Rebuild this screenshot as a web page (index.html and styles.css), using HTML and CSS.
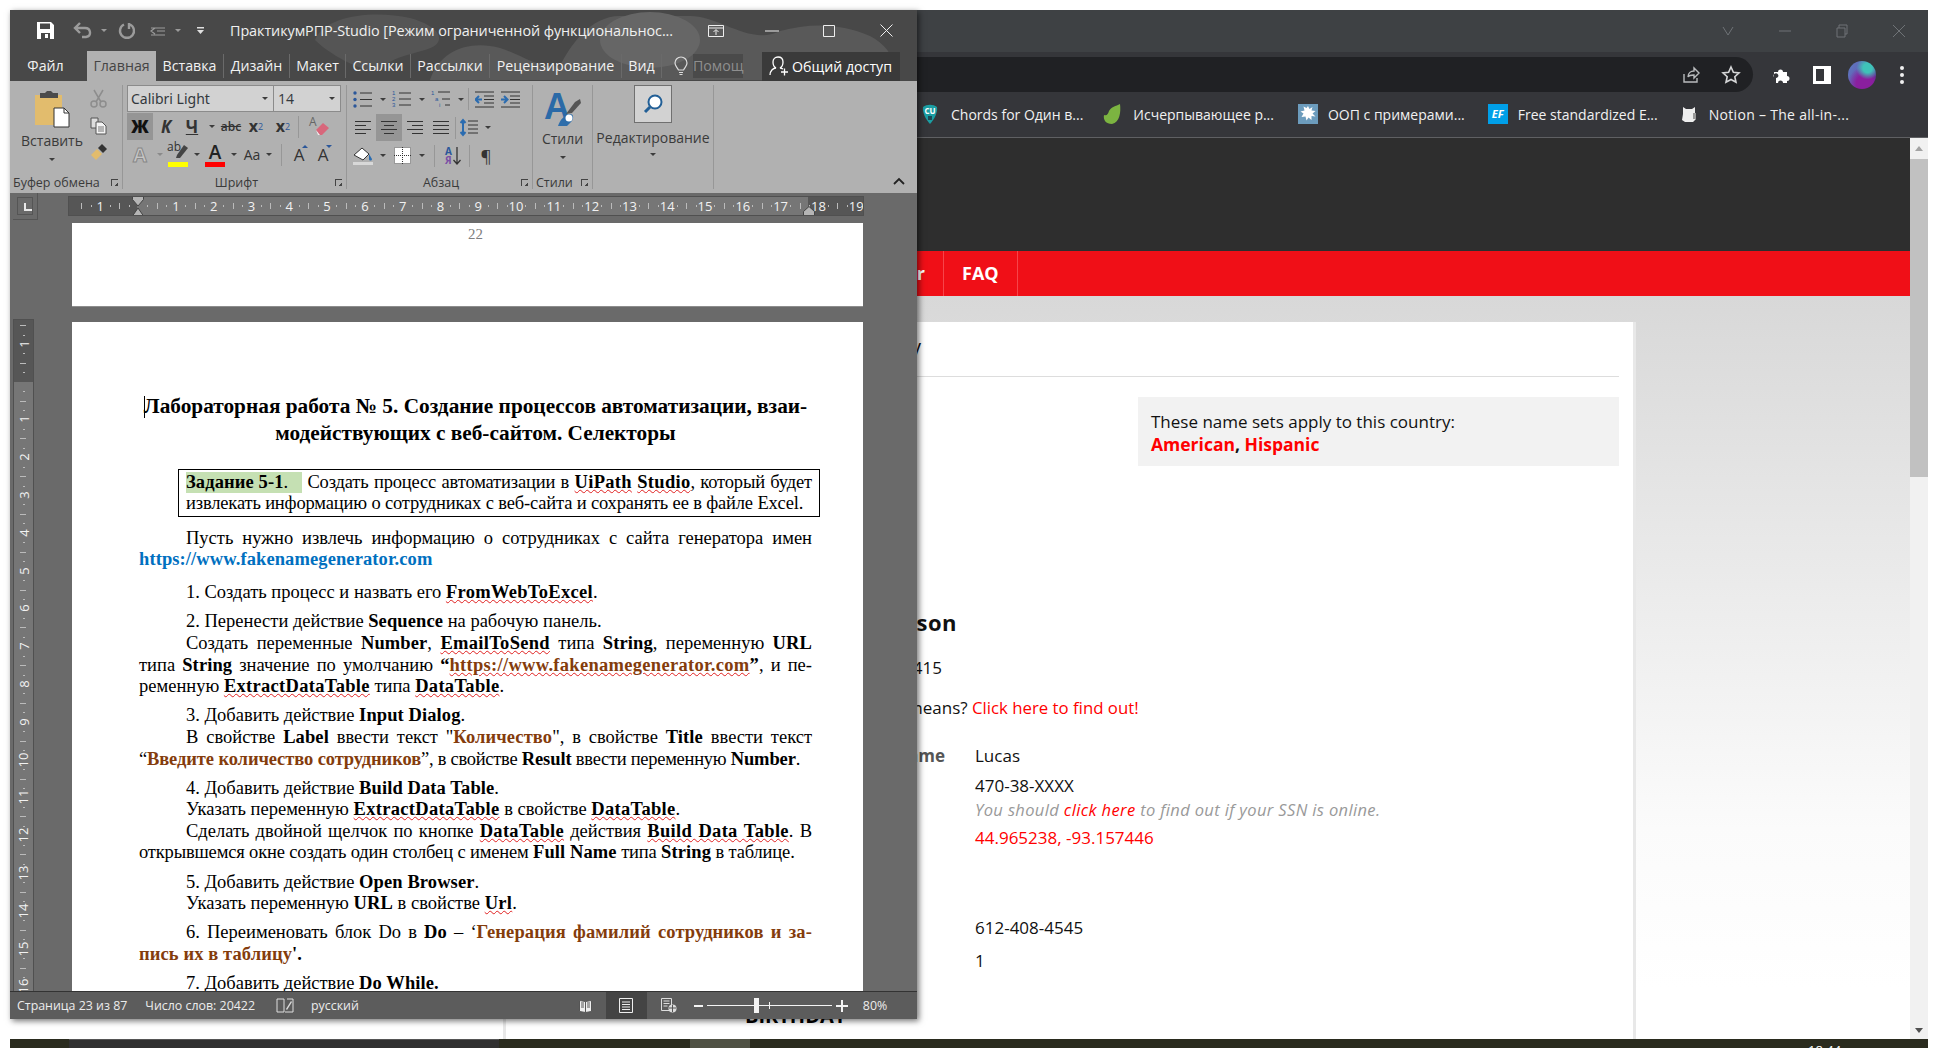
FILE: index.html
```html
<!DOCTYPE html>
<html lang="ru">

<head>
  <meta charset="UTF-8">
  <title>Практикум РПР</title>
  <link rel="stylesheet" href="styles.css">
</head>

<body>
  <!-- browser window, behind word -->
  <div class="chrome">
    <div class="c-top">
      <svg class="c-ctl" width="14" height="12" viewBox="0 0 14 12"><path d="M2 2l5 8 5-8" fill="none" stroke="#6f7377" stroke-width="1"/></svg>
      <svg class="c-ctl" width="14" height="12" viewBox="0 0 14 12"><path d="M1 6h12" stroke="#6f7377"/></svg>
      <svg class="c-ctl" width="14" height="14" viewBox="0 0 14 14"><path d="M2 4h8v9H2zM4 4V1h8v9h-2" fill="none" stroke="#6f7377"/></svg>
      <svg class="c-ctl" width="14" height="14" viewBox="0 0 14 14"><path d="M1 1l12 12M13 1L1 13" stroke="#6f7377"/></svg>
    </div>
    <div class="c-bar">
      <div class="omni">
        <svg width="20" height="20" viewBox="0 0 20 20"><path d="M3 9v8h13v-4M7 12c0-4 3-6 6-6V3l5 5-5 5v-3c-3 0-5 0-6 2z" fill="none" stroke="#b9bbbd" stroke-width="1.4"/></svg>
        <svg width="20" height="20" viewBox="0 0 20 20"><path d="M10 2l2.4 5.3 5.6.6-4.2 3.8 1.2 5.6L10 14.5 5 17.3l1.2-5.6L2 7.9l5.6-.6z" fill="none" stroke="#d5d6d7" stroke-width="1.6"/></svg>
      </div>
      <svg class="puzzle" width="18" height="18" viewBox="0 0 18 18"><path d="M1 6h4a2.4 2.4 0 1 1 5 0h4v4a2.4 2.4 0 1 1 0 5v2H10a2.4 2.4 0 1 0-5 0H3v-5a2.4 2.4 0 1 0-2-1z" fill="#fff"/></svg>
      <svg class="sidep" width="18" height="18" viewBox="0 0 18 18"><path d="M0 0h18v18H0zM3 3v12h8V3z" fill="#fff" fill-rule="evenodd"/></svg>
      <span class="avatar"></span>
      <span class="dots"><i></i><i></i><i></i></span>
    </div>
    <div class="c-marks">
      <span class="mark mark1">
        <svg width="16" height="20" viewBox="0 0 16 20"><path d="M1 3c4-3 10-3 14 0 1 5-3 13-7 17C4 16 0 8 1 3z" fill="#1b9ea3"/><text x="8" y="10" class="cu">CU</text><rect x="6" y="12" width="4" height="4" fill="#1d4a55"/></svg>
        Chords for Один в...
      </span>
      <span class="mark mark2">
        <svg width="18" height="20" viewBox="0 0 18 20"><path d="M17 0c1 8 0 18-8 20C3 20 0 16 1 11c3 1 4-1 5-4 2-4 7-5 11-7z" fill="#7cb441"/></svg>
        Исчерпывающее р...
      </span>
      <span class="mark mark3">
        <svg width="20" height="20" viewBox="0 0 20 20"><rect width="20" height="20" fill="#6c9cbd"/><path d="M10 2l1.5 3 3-2-1 3.500 4 .5-3 2.500 3 3-4-.5 0 4-3-2.500-2 3-1-4-4 .5 2-3.500-3-2 4-1-1-4 3 1.500z" fill="#fff"/></svg>
        ООП с примерами...
      </span>
      <span class="mark mark4">
        <span class="ef">EF</span>
        Free standardized E...
      </span>
      <span class="mark mark5">
        <svg width="20" height="20" viewBox="0 0 20 20"><path d="M4 3l3 2h6l3-2 0 6 1 6-3 3H6l-3-2 1-6z" fill="#eee"/><path d="M14 9h3v6h-3z" fill="#999"/></svg>
        Notion – The all-in-...
      </span>
    </div>
    <div class="c-view">
      <div class="site">
        <div class="site-top"></div>
        <nav class="site-nav">
          <a class="nav-item nav-first" href="#">Order</a>
          <a class="nav-item" href="#">FAQ</a>
        </nav>
        <div class="panel">
          <div class="panel-head">Country</div>
          <div class="sets">
            <div class="sets-box">
              These name sets apply to this country:<br>
              <b><a href="#">American</a>, <a href="#">Hispanic</a></b>
            </div>
          </div>
          <div class="rec rec-name"><b>Anderson</b></div>
          <div class="rec rec-addr">55415</div>
          <div class="rec rec-means"><span class="cut">means?&nbsp;</span><a href="#">Click here to find out!</a></div>
          <div class="rec rec-first"><b class="cut lab">name</b><span>Lucas</span></div>
          <div class="rec rec-ssn"><span class="cut"></span><span>470-38-XXXX</span></div>
          <div class="rec rec-note"><span class="cut"></span><span>You should <a href="#">click here</a> to find out if your SSN is online.</span></div>
          <div class="rec rec-geo"><span class="cut"></span><a href="#">44.965238, -93.157446</a></div>
          <div class="rec rec-phone"><span class="cut"></span><span>612-408-4545</span></div>
          <div class="rec rec-code"><span class="cut"></span><span>1</span></div>
          <div class="birth">BIRTHDAY</div>
        </div>
      </div>
      <div class="c-scroll">
        <i class="arr-up"></i>
        <span class="thumb"></span>
        <i class="arr-down"></i>
      </div>
    </div>
  </div>
  <div class="taskbar">
    <span class="task-a"></span>
    <span class="task-b"></span>
    <span class="clock">18:44</span>
  </div>

  <!-- word window -->
  <div class="word">
    <svg class="blobs" width="907" height="71" viewBox="0 0 907 71">
      <path d="M305 30c10-25 60-30 95-22 30 8 40 25 15 32-20 6-35 8-45 20-15 4-50-15-65-30z" fill="#555"/>
      <path d="M420 70c10-30 40-40 70-32 25 8 35 20 60 18 10-20 30-50 60-50h70c30 0 60 30 90 15 30-8 60-8 90 5 20 10 30 30 20 44z" fill="#595959"/>
      <ellipse cx="640" cy="30" rx="50" ry="28" fill="#666"/>
    </svg>

    <div class="w-title">
      <svg class="q-save" width="17" height="17" viewBox="0 0 17 17"><path d="M0 0h14l3 3v14H0zM3 1.500V7h10V1.500zM4 11v6h9v-6zM8 12h3v4H8z" fill="#fff" fill-rule="evenodd"/></svg>
      <svg class="q-undo" width="20" height="17" viewBox="0 0 20 17"><path d="M7 1L2 6l5 5M2 6h10c6 0 7 8 1 9H9" fill="none" stroke="#9b9b9b" stroke-width="2.400"/></svg>
      <i class="car car-g q-c1"></i>
      <svg class="q-redo" width="18" height="18" viewBox="0 0 18 18"><path d="M12 2.500a7 7 0 1 1-6 0M11 1v6" fill="none" stroke="#9b9b9b" stroke-width="2.400"/></svg>
      <svg class="q-cust" width="16" height="12" viewBox="0 0 16 12"><path d="M1 3h14M7 6h8M1 10h14M5 3L1 6l4 3" fill="none" stroke="#9b9b9b" stroke-width="1.200"/></svg>
      <i class="car car-g q-c2"></i>
      <svg class="q-more" width="7" height="8" viewBox="0 0 7 8"><path d="M0 0h7v1.500H0zM0 3h7L3.500 7z" fill="#e0e0e0"/></svg>
      <span class="w-name">ПрактикумРПР-Studio [Режим ограниченной функциональнос...</span>
      <svg class="w-btn1" width="16" height="12" viewBox="0 0 16 12"><path d="M.5.500h15v11H.5zM0 3h16M8 10V5M5.500 7L8 4.500 10.500 7" fill="none" stroke="#eee"/></svg>
      <svg class="w-btn2" width="14" height="2" viewBox="0 0 14 2"><path d="M0 1h14" stroke="#eee"/></svg>
      <svg class="w-btn3" width="12" height="12" viewBox="0 0 12 12"><path d="M.5.500h11v11H.5z" fill="none" stroke="#eee"/></svg>
      <svg class="w-btn4" width="13" height="13" viewBox="0 0 13 13"><path d="M.5.500l12 12M12.500.500l-12 12" stroke="#eee"/></svg>
    </div>

    <div class="w-tabs">
      <span class="tab tab-file">Файл</span>
      <span class="tab tab-on">Главная</span>
      <span class="tab t-ins">Вставка</span>
      <span class="tab t-des">Дизайн</span>
      <span class="tab t-lay">Макет</span>
      <span class="tab t-ref">Ссылки</span>
      <span class="tab t-mail">Рассылки</span>
      <span class="tab t-rev">Рецензирование</span>
      <span class="tab t-view">Вид</span>
      <svg class="bulb" width="14" height="20" viewBox="0 0 14 20"><path d="M4.500 14C3 11 1 10 1 7a6 6 0 0 1 12 0c0 3-2 4-3.500 7zM5 16.500h4M5.500 18.500h3" fill="none" stroke="#ddd" stroke-width="1.200"/></svg>
      <span class="help">Помощ</span>
      <span class="share">
        <svg width="20" height="20" viewBox="0 0 20 20"><path d="M1 19c0-4 3-7 6-7-2-1-3-3-3-6 0-3 2-5 5-5s5 2 5 5c0 3-1 5-3 6 1 0 2 .5 3 1M12 16h7M15.500 12.500v7" fill="none" stroke="#fff" stroke-width="1.300"/></svg>
        Общий доступ
      </span>
    </div>

    <div class="ribbon">
      <section class="grp g-clip">
        <div class="grp-body clip-body">
          <div class="paste">
            <svg width="36" height="38" viewBox="0 0 36 38"><path d="M1 5h27v30H1z" fill="#e2bc6d"/><path d="M6 3h5l2-2h4l2 2h5v5H6z" fill="#4b4b4b"/><path d="M20 18h10l5 5v14H20z" fill="#fff" stroke="#333"/><path d="M30 18v5h5" fill="none" stroke="#333"/></svg>
            <span class="big-t">Вставить</span>
            <i class="car"></i>
          </div>
          <div class="clip-tools">
            <svg width="17" height="19" viewBox="0 0 17 19"><path d="M4 1l7 12M13 1L6 13" stroke="#8d8d8d" stroke-width="1.500"/><circle cx="4" cy="15" r="3" fill="none" stroke="#8d8d8d" stroke-width="1.500"/><circle cx="13" cy="15" r="3" fill="none" stroke="#8d8d8d" stroke-width="1.500"/></svg>
            <svg width="17" height="18" viewBox="0 0 17 18"><path d="M1 1h7v10H1z" fill="#ddd" stroke="#555"/><path d="M6 5h6l4 4v8H6z" fill="#f4f4f4" stroke="#555"/><path d="M8 10h6M8 12h6M8 14h6" stroke="#777"/></svg>
            <svg width="17" height="17" viewBox="0 0 17 17"><path d="M1 11l6-6 5 5-6 6z" fill="#e2bc6d"/><path d="M8 4l4-4 5 5-4 4z" fill="#333"/></svg>
          </div>
        </div>
        <div class="grp-label">Буфер обмена<i class="launch"></i></div>
      </section>

      <section class="grp g-font">
        <div class="grp-body">
          <div class="font-combo">
            <span class="combo c-name">Calibri Light<i class="car"></i></span>
            <span class="combo c-size">14<i class="car"></i></span>
          </div>
          <div class="row">
            <span class="b w26 b-on t-b">Ж</span>
            <span class="b w26 t-i">К</span>
            <span class="b w26 t-u">Ч</span>
            <span class="b w13"><i class="car"></i></span>
            <span class="b w26 t-s">abc</span>
            <span class="b w24 t-x">x<sub>2</sub></span>
            <span class="b w26 t-x m2">x<sup>2</sup></span>
            <span class="sep sep1"></span>
            <span class="b w26">
              <svg width="22" height="22" viewBox="0 0 22 22"><text x="1" y="10" class="er-a">A</text><path d="M8 14l7-7 6 5-7 7h-3z" fill="#d8677b"/><path d="M8 14l4 5h-2z" fill="#eee"/></svg>
            </span>
          </div>
          <div class="row">
            <span class="b w26 t-glow">A</span>
            <span class="b w13"><i class="car car-l"></i></span>
            <span class="b w24 hl">
              <span class="hl-t">ab</span>
              <svg width="14" height="16" viewBox="0 0 14 16"><path d="M2 11l7-10 4 3-8 10H1z" fill="#444"/></svg>
              <i class="bar bar-y"></i>
            </span>
            <span class="b w13"><i class="car"></i></span>
            <span class="b w24 t-col">A<i class="bar bar-r"></i></span>
            <span class="b w13"><i class="car"></i></span>
            <span class="b w24 t-aa">Aa</span>
            <span class="b w10"><i class="car"></i></span>
            <span class="sep sep2"></span>
            <span class="b w24 t-gr">A<i class="up"></i></span>
            <span class="b w24 t-gr">A<i class="down"></i></span>
          </div>
        </div>
        <div class="grp-label">Шрифт<i class="launch"></i></div>
      </section>

      <section class="grp g-para">
        <div class="grp-body">
          <div class="row r-top">
            <span class="b w26"><svg width="20" height="17" viewBox="0 0 20 17"><path d="M7 2h12M7 8.500h12M7 15h12" stroke="#333" stroke-width="1"/><circle cx="2" cy="2" r="1.700" fill="#2b579a"/><circle cx="2" cy="8.500" r="1.700" fill="#2b579a"/><circle cx="2" cy="15" r="1.700" fill="#2b579a"/></svg></span>
            <span class="b w13"><i class="car"></i></span>
            <span class="b w26"><svg width="20" height="18" viewBox="0 0 20 18"><path d="M7 3h12M7 9h12M7 15h12" stroke="#333"/><text x="0" y="5" class="nums">1</text><text x="0" y="11" class="nums">2</text><text x="0" y="17" class="nums">3</text></svg></span>
            <span class="b w13"><i class="car"></i></span>
            <span class="b w26"><svg width="20" height="18" viewBox="0 0 20 18"><path d="M7 2h12M11 9h8M14 15h5" stroke="#333"/><text x="0" y="5" class="nums">1</text><text x="4" y="11" class="nums">a</text><text x="8" y="17" class="nums">i</text></svg></span>
            <span class="b w13"><i class="car"></i></span>
            <span class="sep sep3"></span>
            <span class="b w26"><svg width="19" height="17" viewBox="0 0 19 17"><path d="M0 1h19M9 5h10M9 8.500h10M9 12h10M0 16h19" stroke="#333"/><path d="M7 8.500H1M4 5L.5 8.500 4 12" fill="none" stroke="#2b6cb0" stroke-width="2"/></svg></span>
            <span class="b w26"><svg width="19" height="17" viewBox="0 0 19 17"><path d="M0 1h19M9 5h10M9 8.500h10M9 12h10M0 16h19" stroke="#333"/><path d="M0 8.500h6M3 5l3.500 3.500L3 12" fill="none" stroke="#2b6cb0" stroke-width="2"/></svg></span>
          </div>
          <div class="row">
            <span class="b w26"><svg width="16" height="13" viewBox="0 0 16 13"><path d="M0 .500h16M0 4.500h11M0 8.500h16M0 12.500h11" stroke="#333"/></svg></span>
            <span class="b w26 b-on"><svg width="16" height="13" viewBox="0 0 16 13"><path d="M0 .500h16M3 4.500h10M0 8.500h16M3 12.500h10" stroke="#333"/></svg></span>
            <span class="b w26"><svg width="16" height="13" viewBox="0 0 16 13"><path d="M0 .500h16M5 4.500h11M0 8.500h16M5 12.500h11" stroke="#333"/></svg></span>
            <span class="b w26"><svg width="16" height="13" viewBox="0 0 16 13"><path d="M0 .500h16M0 4.500h16M0 8.500h16M0 12.500h16" stroke="#333"/></svg></span>
            <span class="sep sep4"></span>
            <span class="b w24"><svg width="18" height="19" viewBox="0 0 18 19"><path d="M8 3h10M8 7h10M8 11h10M8 15h10" stroke="#333"/><path d="M3 2v15M.5 5L3 2l2.500 3M.5 14L3 17l2.500-3" fill="none" stroke="#2b6cb0" stroke-width="2"/></svg></span>
            <span class="b w13"><i class="car"></i></span>
          </div>
          <div class="row">
            <span class="b w26"><svg width="20" height="20" viewBox="0 0 20 20"><path d="M1 9l8-7 7 6-6 6z" fill="#fff" stroke="#333"/><path d="M16 8l3 5c0 2-3 2-3 0z" fill="#2b6cb0"/><path d="M0 16h20v3H0z" fill="#d8d8d8"/></svg></span>
            <span class="b w13"><i class="car"></i></span>
            <span class="b w26"><svg width="17" height="17" viewBox="0 0 17 17"><path d="M0 0h17v17H0z" fill="#fff"/><path d="M.5.500h16v16H.5zM8.500 0v17M0 8.500h17" fill="none" stroke="#333" stroke-dasharray="1 1"/></svg></span>
            <span class="b w13"><i class="car"></i></span>
            <span class="sep sep5"></span>
            <span class="b w24 sort"><span class="s-a">А<br><em>Я</em></span><svg width="8" height="18" viewBox="0 0 8 18"><path d="M4 0v17M.5 13L4 17l3.500-4" fill="none" stroke="#333" stroke-width="1.300"/></svg></span>
            <span class="sep sep6"></span>
            <span class="b w24 t-pil">¶</span>
          </div>
        </div>
        <div class="grp-label">Абзац<i class="launch"></i></div>
      </section>

      <section class="grp g-sty">
        <div class="grp-body big">
          <svg width="38" height="36" viewBox="0 0 38 36"><text x="0" y="29" class="sty-a">A</text><path d="M22 24l9-12 5-3 1 4-9 10z" fill="#555"/><path d="M14 36c2-6 6-11 12-12 4 0 4 5 1 8l-4 4z" fill="#2f6eab"/><circle cx="25" cy="28" r="3.500" fill="#fff"/></svg>
          <span class="big-t">Стили</span>
          <i class="car"></i>
        </div>
        <div class="grp-label">Стили<i class="launch"></i></div>
      </section>

      <section class="grp g-edit">
        <div class="grp-body big">
          <span class="find"><svg width="20" height="20" viewBox="0 0 20 20"><circle cx="12" cy="8" r="6.500" fill="#fff" stroke="#225f96" stroke-width="2"/><path d="M7 13l-5 5" stroke="#225f96" stroke-width="3"/></svg></span>
          <span class="big-t">Редактирование</span>
          <i class="car"></i>
        </div>
        <div class="grp-label"></div>
      </section>
      <svg class="collapse" width="12" height="8" viewBox="0 0 12 8"><path d="M1 7l5-5 5 5" fill="none" stroke="#222" stroke-width="1.800"/></svg>
    </div>

    <div class="w-doc">
      <div class="h-row">
        <span class="corner"><i></i></span>
        <div class="h-ruler">
          <span class="rc rc-first">1</span><span class="rc"></span><span class="rc">1</span><span class="rc">2</span><span class="rc">3</span><span class="rc">4</span><span class="rc">5</span><span class="rc">6</span><span class="rc">7</span><span class="rc">8</span><span class="rc">9</span><span class="rc">10</span><span class="rc">11</span><span class="rc">12</span><span class="rc">13</span><span class="rc">14</span><span class="rc">15</span><span class="rc">16</span><span class="rc">17</span><span class="rc">18</span><span class="rc">19</span>
          <svg class="hour" width="12" height="28" viewBox="0 0 12 28"><path d="M.5.500h11v4L6 11 .5 4.500zM.5 21L6 13l5.500 8zM.5 22h11v5.500H.5z" fill="#b5b5b5" stroke="#444"/></svg>
          <svg class="tri" width="12" height="10" viewBox="0 0 12 10"><path d="M.5 9.500v-4L6 .5l5.500 5v4z" fill="#b5b5b5" stroke="#444"/></svg>
        </div>
      </div>
      <div class="d-row">
        <div class="v-ruler">
          <span class="vc"><b>1</b></span><span class="vc"></span><span class="vc"><b>1</b></span><span class="vc"><b>2</b></span><span class="vc"><b>3</b></span><span class="vc"><b>4</b></span><span class="vc"><b>5</b></span><span class="vc"><b>6</b></span><span class="vc"><b>7</b></span><span class="vc"><b>8</b></span><span class="vc"><b>9</b></span><span class="vc"><b>10</b></span><span class="vc"><b>11</b></span><span class="vc"><b>12</b></span><span class="vc"><b>13</b></span><span class="vc"><b>14</b></span><span class="vc"><b>15</b></span><span class="vc"><b>16</b></span>
        </div>
        <div class="pages">
          <div class="sheet sheet-prev"><div class="pnum">22</div></div>
          <div class="sheet sheet-cur">
            <h1 class="d-h"><i class="cursor"></i>Лабораторная работа № 5. Создание процессов автоматизации, взаи-<br>модействующих с веб-сайтом. Селекторы</h1>

            <div class="task">
              <div class="jl tight"><span class="mark-g"><b>Задание 5-1</b>.</span> Создать процесс автоматизации в <b class="sp">UiPath</b> <b class="sp">Studio</b>, который будет</div>
              <div class="tight">извлекать информацию о сотрудниках с веб-сайта и сохранять ее в файле Excel.</div>
            </div>

            <div class="para p-first">
              <div class="jl ind">Пусть нужно извлечь информацию о сотрудниках с сайта генератора имен</div>
              <div><b class="url">https://www.fakenamegenerator.com</b></div>
            </div>
            <div class="para p-wide">
              <div class="ind">1. Создать процесс и назвать его <b class="sp">FromWebToExcel</b>.</div>
            </div>
            <div class="para">
              <div class="ind">2. Перенести действие <b>Sequence</b> на рабочую панель.</div>
              <div class="jl ind">Создать переменные <b>Number</b>, <b class="sp">EmailToSend</b> типа <b>String</b>, переменную <b>URL</b></div>
              <div class="jl">типа <b>String</b> значение по умолчанию <b>“<span class="br sp">https://www.fakenamegenerator.com</span>”</b>, и пе-</div>
              <div>ременную <b class="sp">ExtractDataTable</b> типа <b class="sp">DataTable</b>.</div>
            </div>
            <div class="para">
              <div class="ind">3. Добавить действие <b>Input Dialog</b>.</div>
              <div class="jl ind">В свойстве <b>Label</b> ввести текст "<b class="br">Количество</b>", в свойстве <b>Title</b> ввести текст</div>
              <div class="tighter">“<b class="br">Введите количество сотрудников</b>”, в свойстве <b>Result</b> ввести переменную <b>Number</b>.</div>
            </div>
            <div class="para">
              <div class="ind">4. Добавить действие <b>Build Data Table</b>.</div>
              <div class="ind">Указать переменную <b class="sp">ExtractDataTable</b> в свойстве <b class="sp">DataTable</b>.</div>
              <div class="jl ind">Сделать двойной щелчок по кнопке <b class="sp">DataTable</b> действия <b class="sp">Build Data Table</b>. В</div>
              <div class="tight">открывшемся окне создать один столбец с именем <b>Full Name</b> типа <b>String</b> в таблице.</div>
            </div>
            <div class="para">
              <div class="ind">5. Добавить действие <b>Open Browser</b>.</div>
              <div class="ind">Указать переменную <b>URL</b> в свойстве <b class="sp">Url</b>.</div>
            </div>
            <div class="para">
              <div class="jl ind">6. Переименовать блок Do в <b>Do</b> – ‘<b class="br">Генерация фамилий сотрудников и за-</b></div>
              <div><b class="br">пись их в таблицу</b><b>'.</b></div>
            </div>
            <div class="para">
              <div class="ind">7. Добавить действие <b>Do While.</b></div>
            </div>
          </div>
        </div>
      </div>
    </div>

    <div class="w-status">
      <span class="st st-page">Страница 23 из 87</span>
      <span class="st st-words">Число слов: 20422</span>
      <svg class="st-book" width="18" height="16" viewBox="0 0 18 16"><path d="M1 1h7v13H1zM11 1l6 0v13h-8" fill="none" stroke="#ddd"/><path d="M10 11l5-8 1 1-5 8z" fill="#ddd"/></svg>
      <span class="st st-lang">русский</span>
      <svg class="st-read" width="14" height="14" viewBox="0 0 14 14"><path d="M.5 1.500l6 1 6-1v11l-6 1-6-1zM6.500 2.500v11M2 4h3M2 6h3M2 8h3M8 4h3M8 6h3M8 8h3" fill="#eee" stroke="#555"/></svg>
      <span class="st-act"><svg width="14" height="15" viewBox="0 0 14 15"><path d="M.5.500h13v14H.5zM3 4h8M3 6.500h8M3 9h8M3 11.500h8" fill="none" stroke="#eee"/></svg></span>
      <svg class="st-web" width="16" height="15" viewBox="0 0 16 15"><path d="M.5.500h10v12H.5zM2.500 3h6M2.500 5.500h6M2.500 8h4" fill="none" stroke="#ddd"/><circle cx="11.500" cy="10.500" r="4" fill="#ddd"/><path d="M8 10h7M11.500 7v7" stroke="#555"/></svg>
      <i class="z-minus"></i>
      <span class="z-track"><i class="z-mid"></i><i class="z-thumb"></i></span>
      <i class="z-plus"></i>
      <span class="st st-zoom">80%</span>
    </div>
  </div>
</body>

</html>
```

FILE: styles.css
```css
* {
  box-sizing: border-box;
}

html,
body {
  margin: 0;
  height: 100%;
}

body {
  width: 1938px;
  height: 1048px;
  padding: 10px 10px 0;
  display: flex;
  flex-direction: column;
  overflow: hidden;
  background: #fff;
  position: relative;
  font-family: "Open Sans", "Noto Sans", sans-serif;
  color: #111;
}

svg {
  display: block;
  flex: none;
}

a {
  color: #f00;
  text-decoration: none;
}

/* browser */

.chrome {
  flex: 1;
  display: flex;
  flex-direction: column;
  min-height: 0;
  background: #3e4144;
}

.c-top {
  height: 42px;
  flex: none;
  display: flex;
  justify-content: flex-end;
  align-items: center;
  padding-right: 22px;
  gap: 43px;
}

.c-bar {
  height: 40px;
  flex: none;
  background: #35363a;
  display: flex;
  align-items: center;
  padding-top: 5px;
}

.omni {
  width: 1743px;
  height: 35px;
  background: #202124;
  border-radius: 0 18px 18px 0;
  display: flex;
  justify-content: flex-end;
  align-items: center;
  gap: 20px;
  padding-right: 12px;
}

.puzzle {
  margin-left: 20px;
}

.sidep {
  margin-left: 22px;
}

.avatar {
  width: 28px;
  height: 28px;
  margin-left: 17px;
  border-radius: 50%;
  background: radial-gradient(circle at 70% 25%, #3fc3b8 0 16%, transparent 40%), radial-gradient(circle at 60% 80%, #8a1f9e 0 30%, transparent 60%), linear-gradient(120deg, #5a7fc0, #6a4fb0 60%, #2f2a70);
}

.dots {
  margin-left: 24px;
  width: 4px;
  display: flex;
  flex-direction: column;
  gap: 3px;
}

.dots i {
  width: 4px;
  height: 4px;
  border-radius: 50%;
  background: #f0f0f0;
}

.c-marks {
  height: 46px;
  flex: none;
  background: #35363a;
  border-bottom: 1px solid #5f6063;
  display: flex;
  align-items: center;
  padding: 0 0 1px 912px;
  font-size: 14px;
  color: #f1f1f1;
}

.mark {
  display: flex;
  align-items: center;
  gap: 10px;
  white-space: nowrap;
}

.mark1 {
  gap: 13px;
}

.mark2 {
  margin-left: 20px;
  gap: 12px;
}

.mark3 {
  margin-left: 24px;
}

.mark4 {
  margin-left: 23px;
}

.mark5 {
  margin-left: 21px;
  letter-spacing: .3px;
}

.cu {
  font: bold 8px "Open Sans", sans-serif;
  fill: #fff;
  text-anchor: middle;
}

.ef {
  width: 20px;
  height: 20px;
  background: #009fe8;
  color: #fff;
  font: italic bold 11px/20px "Open Sans", sans-serif;
  text-align: center;
}

.c-view {
  flex: 1;
  display: flex;
  min-height: 0;
}

.site {
  flex: 1;
  overflow: hidden;
  background: linear-gradient(#d8d8d8 158px, #fbfbfb 690px, #fff 850px);
}

.site-top {
  height: 113px;
  background: #2e2e2e;
}

.site-nav {
  height: 45px;
  background: #f00f17;
  display: flex;
}

.nav-item {
  color: #fff;
  font-size: 18px;
  font-weight: 700;
  line-height: 45px;
  padding: 0 18px;
  border-right: 1px solid #f6444a;
}

.nav-first {
  width: 934px;
  text-align: right;
}

.panel {
  margin: 26px 0 0 493px;
  width: 1133px;
  height: 800px;
  background: #fff;
  border: solid #e8e8e8;
  border-width: 0 3px;
  font-size: 17px;
  line-height: 24px;
}

.panel-head {
  height: 55px;
  margin-right: 14px;
  padding-right: 698px;
  border-bottom: 1px solid #ddd;
  text-align: right;
  font-size: 20px;
  line-height: 50px;
}

.sets {
  display: flex;
  justify-content: flex-end;
  margin: 20px 14px 0 0;
}

.sets-box {
  width: 481px;
  height: 69px;
  padding: 13px 13px;
  background: #f2f2f2;
  font-size: 17px;
  line-height: 23px;
}

.sets-box b {
  font-size: 17.500px;
}

.rec {
  display: grid;
  grid-template-columns: 469px 1fr;
  white-space: nowrap;
}

.cut {
  text-align: right;
  padding-right: 30px;
}

.lab {
  color: #555;
}

.rec-name {
  display: block;
  margin-top: 144px;
  font-size: 22px;
  letter-spacing: .5px;
  width: 451px;
  text-align: right;
}

.rec-addr {
  display: block;
  margin-top: 22px;
  width: 436px;
  text-align: right;
}

.rec-means {
  margin-top: 16px;
  grid-template-columns: 466px 1fr;
}

.rec-means a {
  font-size: 16.800px;
}

.rec-means .cut {
  padding-right: 0;
}

.rec-ssn {
  margin-top: 6px;
}

.rec-first {
  margin-top: 24px;
}

.rec-note {
  margin-top: 2px;
  font-size: 16.500px;
  line-height: 20px;
  letter-spacing: .36px;
  font-style: italic;
  color: #999;
}

.rec-geo {
  margin-top: 6px;
}

.rec-phone {
  margin-top: 66px;
}

.rec-code {
  margin-top: 9px;
}

.birth {
  margin: 31px 0 0 239px;
  font-size: 20px;
  font-weight: 700;
  color: #000;
}

.c-scroll {
  width: 18px;
  flex: none;
  background: #f1f1f1;
  display: flex;
  flex-direction: column;
  align-items: center;
  padding: 8px 0 6px;
}

.arr-up {
  border: solid transparent;
  border-width: 0 4px 5px;
  border-bottom-color: #a3a3a3;
}

.thumb {
  width: 100%;
  height: 318px;
  margin-top: 8px;
  background: #c1c1c1;
}

.arr-down {
  margin-top: auto;
  border: solid transparent;
  border-width: 5px 4px 0;
  border-top-color: #505050;
}

.taskbar {
  height: 9px;
  flex: none;
  display: flex;
  background: #2a2b1e;
  color: #fff;
  font-size: 13px;
  line-height: 19px;
  position: relative;
  overflow: hidden;
}

.task-a {
  width: 430px;
  margin-left: 59px;
  background: #303030;
  border-top: 1px solid #555;
}

.task-b {
  width: 60px;
  margin-left: 191px;
  background: #4f5144;
}

.clock {
  margin: 2px 0 0 1058px;
}

/* word */

.word {
  position: absolute;
  left: 10px;
  top: 10px;
  width: 907px;
  height: 1009px;
  display: flex;
  flex-direction: column;
  background: #484848;
  box-shadow: 2px 2px 6px rgba(0, 0, 0, .55);
  font-size: 13px;
  overflow: visible;
}

.blobs {
  position: absolute;
  left: 0;
  top: 0;
}

.w-title {
  height: 41px;
  flex: none;
  display: flex;
  align-items: center;
  position: relative;
  color: #f0f0f0;
}

.q-save {
  margin-left: 27px;
}

.q-undo {
  margin-left: 19px;
}

.car {
  display: inline-block;
  width: 0;
  height: 0;
  border: solid transparent;
  border-width: 3px 3.500px 0;
  border-top-color: #3c3c3c;
}

.car-g {
  border-top-color: #9b9b9b;
}

.car-l {
  border-top-color: #8a8a8a;
}

.q-c1 {
  margin-left: 8px;
}

.q-redo {
  margin-left: 11px;
}

.q-cust {
  margin-left: 14px;
}

.q-c2 {
  margin-left: 9px;
}

.q-more {
  margin-left: 16px;
}

.w-name {
  margin-left: 26px;
  width: 460px;
  font-size: 14.400px;
  letter-spacing: -.08px;
  white-space: nowrap;
}

.w-btn1 {
  margin-left: 18px;
}

.w-btn2 {
  margin-left: 41px;
}

.w-btn3 {
  margin-left: 44px;
}

.w-btn4 {
  margin-left: 45px;
}

.w-tabs {
  height: 30px;
  flex: none;
  display: flex;
  align-items: center;
  position: relative;
  color: #f2f2f2;
  font-size: 14.200px;
}

.tab {
  height: 24px;
  line-height: 24px;
  text-align: center;
  border-right: 1px solid #6a6a6a;
  white-space: nowrap;
}

.tab-file {
  width: 77px;
  padding-right: 6px;
  border: 0;
}

.tab-on {
  width: 69px;
  height: 30px;
  line-height: 30px;
  background: #b1b1b1;
  color: #444;
  border: 0;
  align-self: flex-end;
}

.t-ins {
  width: 68px;
}

.t-des {
  width: 66px;
}

.t-lay {
  width: 56px;
}

.t-ref {
  width: 65px;
}

.t-mail {
  width: 79px;
}

.t-rev {
  width: 132px;
}

.t-view {
  width: 40px;
}

.bulb {
  margin-left: 12px;
}

.help {
  margin-left: 5px;
  width: 50px;
  height: 24px;
  line-height: 24px;
  background: #4a4a4a;
  color: #8f8f8f;
  white-space: nowrap;
}

.share {
  margin-left: 19px;
  width: 138px;
  height: 29px;
  display: flex;
  align-items: center;
  gap: 3px;
  padding-left: 7px;
  background: #3a3a3a;
  color: #fff;
  white-space: nowrap;
}

/* ribbon */

.ribbon {
  height: 112px;
  flex: none;
  display: flex;
  position: relative;
  background: #b1b1b1;
  color: #3a3a3a;
}

.grp {
  height: 104px;
  margin-top: 4px;
  flex: none;
  display: flex;
  flex-direction: column;
  border-right: 1px solid #979797;
}

.grp-body {
  height: 90px;
  flex: none;
}

.grp-label {
  height: 14px;
  line-height: 16px;
  position: relative;
  text-align: center;
  font-size: 12.500px;
  white-space: nowrap;
}

.launch {
  position: absolute;
  right: 4px;
  top: 4px;
  width: 7px;
  height: 7px;
  border-left: 1px solid #444;
  border-top: 1px solid #444;
  background: linear-gradient(135deg, transparent 45%, #444 50%, #444 100%) no-repeat 2px 2px / 5px 5px;
}

.g-clip {
  width: 113px;
}

.g-clip .grp-label,
.g-sty .grp-label {
  text-align: left;
  padding-left: 3px;
}

.clip-body {
  display: flex;
}

.paste {
  width: 76px;
  margin-left: 4px;
  padding-top: 5px;
  display: flex;
  flex-direction: column;
  align-items: center;
}

.big-t {
  font-size: 14px;
  line-height: 18px;
  margin-top: 4px;
  white-space: nowrap;
}

.paste .car,
.big .car {
  margin-top: 8px;
}

.clip-tools {
  width: 17px;
  padding-top: 4px;
  display: flex;
  flex-direction: column;
  gap: 9px;
}

.g-font {
  width: 224px;
  padding-left: 4px;
}

.font-combo {
  display: flex;
  height: 28px;
}

.combo {
  display: flex;
  justify-content: space-between;
  align-items: center;
  height: 27px;
  padding: 0 5px 0 3px;
  background: #d2d2d2;
  border: 1px solid #8b8b8b;
  font-size: 14px;
  color: #33383d;
}

.c-name {
  width: 147px;
  font-family: "Noto Sans", sans-serif;
}

.c-size {
  width: 68px;
  margin-left: -1px;
  padding-left: 4px;
}

.row {
  height: 27px;
  display: flex;
  align-items: center;
  margin-bottom: 1px;
}

.b {
  height: 27px;
  flex: none;
  display: flex;
  justify-content: center;
  align-items: center;
  position: relative;
  font-size: 17px;
  line-height: 27px;
  color: #333;
}

.w26 {
  width: 26px;
}

.w24 {
  width: 24px;
}

.w13 {
  width: 13px;
}

.w10 {
  width: 10px;
}

.m2 {
  margin-left: 2px;
}

.b-on {
  background: #959595;
}

.t-b {
  font-weight: 800;
  color: #111;
}

.t-i {
  font-weight: 700;
  font-style: italic;
}

.t-u {
  font-weight: 700;
  text-decoration: underline;
}

.t-s {
  font-size: 12px;
  font-weight: 600;
  text-decoration: line-through;
}

.t-x {
  font-weight: 700;
  font-size: 16px;
}

.t-x sub,
.t-x sup {
  font-size: 9px;
  font-weight: 400;
  color: #2b579a;
  line-height: 0;
}

.sep {
  width: 1px;
  height: 22px;
  background: #979797;
  flex: none;
}

.sep1 {
  margin: 0 7px 0 2px;
}

.sep2 {
  margin: 0 5px 0 7px;
}

.sep3 {
  margin: 0 2px 0 1px;
}

.sep4 {
  margin: 0 1px;
}

.sep5 {
  margin: 0 6px;
}

.sep6 {
  margin: 0 4px;
}

.er-a {
  font: 12px "Open Sans", sans-serif;
  fill: #666;
}

.t-glow {
  font-size: 20px;
  color: #c5c5c5;
  -webkit-text-stroke: 1px #888;
  font-weight: 700;
}

.hl {
  padding-bottom: 6px;
}

.hl-t {
  font-size: 12px;
  line-height: 12px;
  margin-right: -6px;
  align-self: flex-start;
}

.bar {
  position: absolute;
  left: 2px;
  right: 2px;
  bottom: 1px;
  height: 5px;
}

.bar-y {
  background: #ff0;
}

.bar-r {
  background: #f00;
}

.t-col {
  font-size: 19px;
  font-weight: 600;
  line-height: 20px;
  padding-bottom: 6px;
  color: #222;
}

.t-aa {
  font-size: 14px;
}

.t-gr {
  font-size: 17px;
}

.up,
.down {
  position: absolute;
  top: 4px;
  right: 3px;
  border: solid transparent;
  border-width: 0 3px 3px;
  border-bottom-color: #2b579a;
}

.down {
  border-width: 3px 3px 0;
  border-top-color: #2b579a;
}

.g-para {
  width: 186px;
  padding-left: 3px;
}

.g-para .r-top {
  height: 28px;
  margin-bottom: 1px;
}

.nums {
  font: 6px "Liberation Sans", sans-serif;
  fill: #2b579a;
}

.sort {
  gap: 1px;
}

.s-a {
  font-size: 10px;
  line-height: 9px;
  font-weight: 700;
  color: #2b579a;
}

.s-a em {
  font-style: normal;
  color: #7a4ea5;
}

.t-pil {
  font-size: 17px;
}

.g-sty {
  width: 60px;
}

.big {
  display: flex;
  flex-direction: column;
  align-items: center;
  padding-top: 5px;
}

.sty-a {
  font: bold 36px "Liberation Sans", sans-serif;
  fill: #2b6aa7;
}

.g-edit {
  width: 121px;
}

.g-edit .big {
  padding-top: 0;
}

.find {
  width: 38px;
  height: 38px;
  display: flex;
  justify-content: center;
  align-items: center;
  background: #d2d2d2;
  border: 1px solid #707070;
}

.g-edit .big-t {
  margin-top: 6px;
}

.g-edit .car {
  margin-top: 6px;
}

.collapse {
  position: absolute;
  right: 12px;
  bottom: 8px;
}

/* document */

.w-doc {
  flex: 1;
  min-height: 0;
  background: #6a6a6a;
  overflow: hidden;
}

.h-row {
  height: 30px;
  display: flex;
}

.corner {
  width: 25px;
  height: 27px;
  margin-left: 3px;
  padding: 4px;
  border: 1px solid #555;
  border-width: 0 1px 1px 0;
  flex: none;
}

.corner i {
  display: block;
  position: relative;
  width: 100%;
  height: 100%;
  border: 1px solid #555;
}

.corner i::after {
  content: "";
  position: absolute;
  left: 6px;
  top: 5px;
  width: 6px;
  height: 6px;
  border: solid #e8e8e8;
  border-width: 0 0 2px 2px;
}

.h-ruler {
  width: 794px;
  height: 18px;
  margin: 4px 0 0 31px;
  padding-left: 12.400px;
  display: flex;
  position: relative;
  overflow: hidden;
  flex: none;
  background: linear-gradient(to right, #565656 68px, #767676 68px, #767676 739px, #565656 739px);
  outline: 1px solid #505050;
  color: #f2f2f2;
  font-size: 13px;
  line-height: 18px;
}

.rc {
  width: 37.800px;
  flex: none;
  text-align: center;
  background:
    linear-gradient(#bbb, #bbb) no-repeat 0 6px / 1px 6px,
    linear-gradient(#bbb, #bbb) no-repeat 9.500px 8px / 1px 2px,
    linear-gradient(#bbb, #bbb) no-repeat 28.300px 8px / 1px 2px;
}

.hour {
  position: absolute;
  left: 63px;
  top: -2px;
}

.tri {
  position: absolute;
  left: 734px;
  top: 9px;
}

.d-row {
  display: flex;
  height: 800px;
}

.v-ruler {
  width: 19px;
  height: 800px;
  margin: 97px 0 0 4px;
  padding-top: 5px;
  flex: none;
  display: flex;
  flex-direction: column;
  background: linear-gradient(#565656 62px, #767676 62px);
  outline: 1px solid #505050;
  color: #f2f2f2;
  font-size: 13px;
}

.vc {
  height: 37.800px;
  flex: none;
  display: flex;
  justify-content: center;
  align-items: center;
  background:
    linear-gradient(#bbb, #bbb) no-repeat 6px 0 / 6px 1px,
    linear-gradient(#bbb, #bbb) no-repeat 8.500px 9.500px / 2px 1px,
    linear-gradient(#bbb, #bbb) no-repeat 8.500px 28.300px / 2px 1px;
}

.vc b {
  font-weight: 400;
  transform: rotate(-90deg);
  white-space: nowrap;
}

.pages {
  width: 791px;
  margin-left: 39px;
  flex: none;
}

.sheet {
  background: #fff;
}

.sheet-prev {
  height: 84px;
  margin-bottom: 15px;
  border-bottom: 1px solid #8d8d8d;
  padding-top: 2px;
}

.pnum {
  text-align: center;
  font: 14.900px/18px "Liberation Serif", serif;
  color: #7f7f7f;
  padding-left: 16px;
}

.sheet-cur {
  padding: 71px 51px 0 67px;
  font: 18.500px/21.600px "Liberation Serif", serif;
  color: #000;
}

.sheet-cur b {
  letter-spacing: .1px;
}

.d-h {
  margin: 0;
  text-align: center;
  font-size: 21.300px;
  font-weight: 700;
  line-height: 27px;
  white-space: nowrap;
}

.cursor {
  display: inline-block;
  width: 1px;
  height: 22px;
  margin-right: -1px;
  vertical-align: -5px;
  background: #000;
}

.task {
  margin: 22px -8px 0 39px;
  padding: 1.500px 7px 1px;
  border: 1.500px solid #000;
  white-space: nowrap;
}

.jl {
  text-align: justify;
  text-align-last: justify;
}

.tight {
  letter-spacing: -.16px;
}

.tighter {
  letter-spacing: -.28px;
}

.tighter b {
  letter-spacing: -.1px;
}

.mark-g {
  display: inline-block;
  background: #c5e0b3;
  padding-right: 14px;
}

.ind {
  text-indent: 47px;
}

.para {
  margin-top: 7.500px;
  white-space: nowrap;
}

.p-first {
  margin-top: 11px;
}

.p-wide {
  margin-top: 11.500px;
}

.url {
  color: #0070c0;
}

.br {
  color: #843c0c;
}

.sp,
.sheet-cur b.sp {
  text-decoration: underline wavy #e02020 1px;
  text-underline-offset: 1px;
  letter-spacing: .3px;
}

/* status bar */

.w-status {
  height: 28px;
  flex: none;
  display: flex;
  align-items: center;
  background: #5c5c5c;
  border-top: 1px solid #333;
  color: #ececec;
  font-size: 12.400px;
  position: relative;
}

.st {
  white-space: nowrap;
}

.st-page {
  margin-left: 7px;
}

.st-words {
  margin-left: 18px;
}

.st-book {
  margin-left: 21px;
}

.st-lang {
  margin-left: 17px;
}

.st-read {
  margin-left: 220px;
}

.st-act {
  width: 41px;
  height: 27px;
  margin-left: 13px;
  display: flex;
  justify-content: center;
  align-items: center;
  background: #444;
}

.st-web {
  margin-left: 14px;
}

.z-minus {
  width: 9px;
  height: 2px;
  margin-left: 17px;
  background: #f4f4f4;
}

.z-track {
  width: 125px;
  height: 1px;
  margin-left: 4px;
  background: #f4f4f4;
  position: relative;
}

.z-mid {
  position: absolute;
  left: 62px;
  top: -3px;
  width: 1px;
  height: 7px;
  background: #f4f4f4;
}

.z-thumb {
  position: absolute;
  left: 47px;
  top: -7px;
  width: 5px;
  height: 15px;
  background: #f4f4f4;
}

.z-plus {
  width: 12px;
  height: 12px;
  margin-left: 4px;
  background: linear-gradient(#f4f4f4, #f4f4f4) no-repeat center / 12px 2px, linear-gradient(#f4f4f4, #f4f4f4) no-repeat center / 2px 12px;
}

.st-zoom {
  margin-left: 15px;
}
```
